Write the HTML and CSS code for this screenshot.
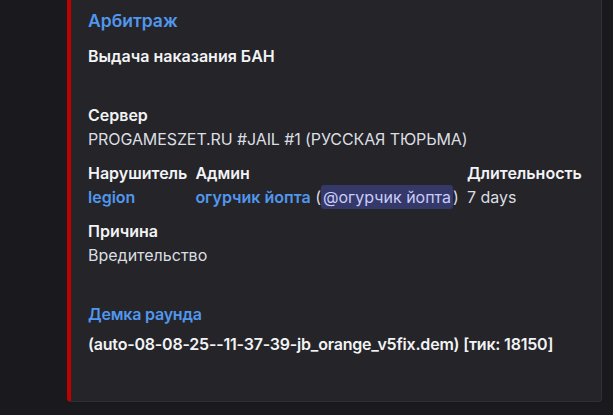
FILE: index.html
```html
<!DOCTYPE html>
<html lang="ru">
<head>
<meta charset="utf-8">
<title>Арбитраж</title>
<link rel="stylesheet" href="styles.css">
</head>
<body>
<div class="chat">
  <article class="embed">
    <div class="embed-title">Арбитраж</div>
    <div class="embed-desc"><strong>Выдача наказания БАН</strong></div>
    <div class="fields">
      <div class="field full">
        <div class="field-name">Сервер</div>
        <div class="field-value server">PROGAMESZET.RU #JAIL #1 (РУССКАЯ ТЮРЬМА)</div>
      </div>
      <div class="field">
        <div class="field-name">Нарушитель</div>
        <div class="field-value"><a class="link">legion</a></div>
      </div>
      <div class="field">
        <div class="field-name">Админ</div>
        <div class="field-value"><a class="link">огурчик йопта</a> (<span class="mention">@огурчик йопта</span>)</div>
      </div>
      <div class="field">
        <div class="field-name">Длительность</div>
        <div class="field-value">7 days</div>
      </div>
      <div class="field full">
        <div class="field-name">Причина</div>
        <div class="field-value">Вредительство</div>
      </div>
    </div>
    <div class="demo-title"><a class="link">Демка раунда</a></div>
    <div class="demo-value">(auto-08-08-25--11-37-39-jb_orange_v5fix.dem) [тик: 18150]</div>
  </article>
</div>
</body>
</html>
```
FILE: styles.css
```css
html, body {
  margin: 0;
  padding: 0;
}
body {
  background: #1a1a1e;
  width: 613px;
  height: 415px;
  overflow: hidden;
  font-family: Inter, "Noto Sans", sans-serif;
  font-size: 16px;
  color: #dbdee1;
}
.chat {
  padding-left: 67px;
}
.embed {
  box-sizing: border-box;
  width: 535px;
  background: #242429;
  border: 1px solid #2f3036;
  border-top: none;
  border-left: 4px solid #c10000;
  border-radius: 0 0 4px 4px;
  padding: 9px 16px 45px 17px;
}
.embed-title {
  font-size: 17.5px;
  font-weight: 600;
  line-height: 24px;
  color: #5197ed;
}
.embed-desc {
  margin-top: 11px;
  line-height: 24px;
  color: #f2f3f5;
}
.embed-desc strong {
  font-weight: 600;
}
.fields {
  margin-top: 35px;
  display: grid;
  grid-template-columns: repeat(3, auto);
  justify-content: start;
  column-gap: 8px;
  row-gap: 10px;
}
.field.full {
  grid-column: 1 / -1;
}
.field-name {
  font-weight: 600;
  line-height: 24px;
  color: #f2f3f5;
}
.field-value {
  line-height: 24px;
  color: #dbdee1;
  white-space: nowrap;
}
.field-value.server {
  letter-spacing: -0.1px;
}
.link {
  color: #5197ed;
  font-weight: 600;
  text-decoration: none;
}
.mention {
  background: #35396a;
  color: #c9cdfb;
  border-radius: 3px;
  padding: 2px 2px;
}
.demo-title {
  margin-top: 35px;
  line-height: 24px;
  letter-spacing: -0.2px;
}
.demo-value {
  margin-top: 6px;
  line-height: 24px;
  font-weight: 600;
  letter-spacing: -0.2px;
  color: #f2f3f5;
}
```
